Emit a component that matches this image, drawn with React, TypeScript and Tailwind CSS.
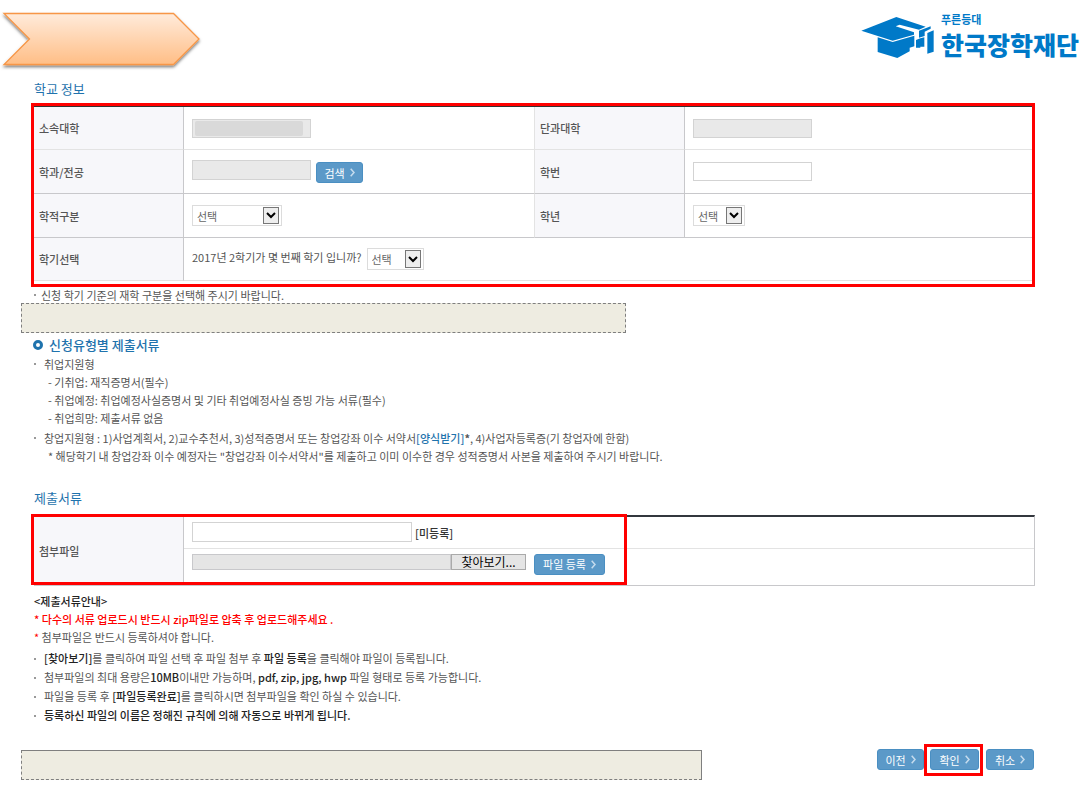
import type { ReactNode } from 'react';
import clsx from 'clsx';

interface SelectBoxProps {
  id: string;
  label?: string;
  className: string;
}

interface ArrowButtonProps {
  children: ReactNode;
  className?: string;
}

const thClass = 'bg-[#f7f7fa] border-r border-b border-r-[#c8c8cb] pl-[5px] text-left align-middle font-medium text-[#555]';
const inputClass = 'block border border-[#d3d3d3] px-1 text-[11px]';

function SelectBox({ id, label, className }: SelectBoxProps) {
  return (
    <div className={clsx('relative', className)}>
      <select
        id={id}
        aria-label={label}
        className="block h-full w-full appearance-none border border-[#dcdcdc] bg-white pl-1 text-[11px] leading-4 text-[#666]"
      >
        <option>선택</option>
      </select>
      <span className="pointer-events-none absolute inset-y-[2px] right-[3px] flex w-4 items-center justify-center border border-[#777] bg-[#eee]">
        <svg viewBox="0 0 10 7" className="h-[7px] w-[10px]" fill="none" stroke="#000" strokeWidth="2">
          <path d="M1 1l4 4 4-4" />
        </svg>
      </span>
    </div>
  );
}

function ArrowButton({ children, className }: ArrowButtonProps) {
  return (
    <button
      type="button"
      className={clsx(
        'flex h-[21px] shrink-0 items-center justify-center gap-[5px] rounded-[3px] border border-[#4a8fc2] bg-[#5b99c8] text-[11px] leading-4 text-white',
        className,
      )}
    >
      {children}
      <svg viewBox="0 0 5 9" className="h-[9px] w-[5px]" fill="none" stroke="#c5dcee" strokeWidth="1.5">
        <path d="M0.7 0.7l3.3 3.8-3.3 3.8" />
      </svg>
    </button>
  );
}

function Bullet({ children, className }: { children: ReactNode; className?: string }) {
  return (
    <li className={clsx('flex items-center gap-2', className)}>
      <span className="ml-px h-[2px] w-[2px] shrink-0 bg-[#999]" />
      <span>{children}</span>
    </li>
  );
}

function Logo() {
  return (
    <div className="flex text-[#0079c8]">
      <svg viewBox="0 0 252 168" className="h-14 w-[84px] shrink-0" fill="currentColor" aria-hidden="true">
        <path d="M13 68L118 27L206 56L186 65L128 50L116 55L171 73L171 80L107 98Z" />
        <path d="M62 88L107 102L172 83L172 115L158 119V130L121 150L62 132Z" />
        <path d="M186 68L221 55V62L203 71V84L186 89Z" />
        <path d="M177 96L190 91L202 88V116H190V119H177Z" />
        <path d="M211 75L230 67V131L211 137Z" />
      </svg>
      <div className="pt-1">
        <p className="text-[11px] leading-[14px] font-bold">푸른등대</p>
        <p className="text-[25px] leading-9 font-black whitespace-nowrap">한국장학재단</p>
      </div>
    </div>
  );
}

export default function App() {
  return (
    <div className="w-full bg-white pb-[30px] font-['Noto_Sans_CJK_KR','Noto_Sans',sans-serif] text-[11px] leading-[18px] text-[#555]">
      <header className="flex h-[79px] items-start justify-between pt-2 pr-px">
        <svg viewBox="0 0 208 66" className="h-[66px] w-[208px]" aria-hidden="true">
          <defs>
            <linearGradient id="arrowFill" x1="0" y1="0" x2="0" y2="1">
              <stop offset="0" stopColor="#ffebdb" />
              <stop offset="1" stopColor="#ffbe86" />
            </linearGradient>
            <filter id="arrowShadow" x="-5%" y="-10%" width="110%" height="130%">
              <feDropShadow dx="0" dy="2" stdDeviation="1.5" floodColor="#000" floodOpacity="0.5" />
            </filter>
          </defs>
          <path
            d="M4 5.5H173.5L199 31L173.5 56.5H4L29.5 31Z"
            fill="url(#arrowFill)"
            stroke="#f79646"
            strokeWidth="1.3"
            filter="url(#arrowShadow)"
          />
        </svg>
        <Logo />
      </header>

      <main className="pr-[45px] pl-[21px]">
        {/* School info */}
        <section className="ml-[10px]">
          <h2 className="mb-1 pl-[3px] text-[13px] leading-5 text-[#1f73ad]">학교 정보</h2>
          <div className="border-3 border-[#ff0000] pb-[3px]">
            <table className="w-full table-fixed border-separate border-spacing-0 border-t border-[#333]">
              <colgroup>
                <col className="w-[150px]" />
                <col className="w-[351px]" />
                <col className="w-[150px]" />
                <col />
              </colgroup>
              <tbody>
                <tr className="h-[43px]">
                  <th className={clsx(thClass, 'border-b-[#e3e3e3]')}>
                    <label htmlFor="university">소속대학</label>
                  </th>
                  <td className="border-r border-b border-[#e3e3e3] pl-2">
                    <div className="relative w-[119px]">
                      <input id="university" readOnly className={clsx(inputClass, 'h-[19px] w-full bg-[#e9e9e9]')} />
                      <span className="absolute inset-y-[2px] left-[3px] w-[108px] rounded-[2px] bg-[#d9d9d9]" />
                    </div>
                  </td>
                  <th className={clsx(thClass, 'border-b-[#e3e3e3]')}>
                    <label htmlFor="college">단과대학</label>
                  </th>
                  <td className="border-b border-[#e3e3e3] pl-2">
                    <input id="college" readOnly className={clsx(inputClass, 'h-[19px] w-[119px] bg-[#e9e9e9]')} />
                  </td>
                </tr>
                <tr className="h-11">
                  <th className={clsx(thClass, 'border-b-[#c8c8cb]')}>
                    <label htmlFor="major">학과/전공</label>
                  </th>
                  <td className="border-r border-b border-r-[#e3e3e3] border-b-[#c8c8cb] pl-2">
                    <div className="flex items-start gap-[5px]">
                      <input id="major" readOnly className={clsx(inputClass, 'h-5 w-[119px] bg-[#e9e9e9]')} />
                      <ArrowButton className="mt-[2px] w-[47px]">검색</ArrowButton>
                    </div>
                  </td>
                  <th className={clsx(thClass, 'border-b-[#c8c8cb]')}>
                    <label htmlFor="studentNo">학번</label>
                  </th>
                  <td className="border-b border-[#c8c8cb] pl-2">
                    <input id="studentNo" className={clsx(inputClass, 'h-[19px] w-[119px] bg-white')} />
                  </td>
                </tr>
                <tr className="h-11">
                  <th className={clsx(thClass, 'border-b-[#c8c8cb]')}>
                    <label htmlFor="status">학적구분</label>
                  </th>
                  <td className="border-r border-b border-r-[#e3e3e3] border-b-[#c8c8cb] pl-2">
                    <SelectBox id="status" className="h-[21px] w-[90px]" />
                  </td>
                  <th className={clsx(thClass, 'border-b-[#c8c8cb]')}>
                    <label htmlFor="grade">학년</label>
                  </th>
                  <td className="border-b border-[#c8c8cb] pl-2">
                    <SelectBox id="grade" className="h-[21px] w-[52px]" />
                  </td>
                </tr>
                <tr className="h-[43px]">
                  <th className={clsx(thClass, 'border-b-[#e3e3e3]')}>학기선택</th>
                  <td colSpan={3} className="border-b border-[#e3e3e3] pl-2">
                    <div className="flex items-start gap-[5px]">
                      <label htmlFor="semester">2017년 2학기가 몇 번째 학기 입니까?</label>
                      <SelectBox id="semester" className="h-[22px] w-[57px]" />
                    </div>
                  </td>
                </tr>
              </tbody>
            </table>
          </div>
          <ul className="pl-[2px] leading-4">
            <Bullet className="gap-[5px]">신청 학기 기준의 재학 구분을 선택해 주시기 바랍니다.</Bullet>
          </ul>
        </section>

        <div className="h-[30px] w-[605px] border border-dashed border-[#7f7f7f] bg-[#eeece1]" />

        {/* Required documents per type */}
        <section className="mt-[2px] ml-[10px] pl-[2px]">
          <h3 className="flex items-center gap-[6px] text-[13px] leading-5 font-medium text-[#1f73ad]">
            <span className="h-[10px] w-[10px] rounded-full border-3 border-[#1f73ad]" />
            신청유형별 제출서류
          </h3>
          <ul>
            <Bullet>취업지원형</Bullet>
            <li className="pl-[15px]">- 기취업: 재직증명서(필수)</li>
            <li className="pl-[15px]">- 취업예정: 취업예정사실증명서 및 기타 취업예정사실 증빙 가능 서류(필수)</li>
            <li className="pl-[15px]">- 취업희망: 제출서류 없음</li>
            <Bullet className="pt-[2px]">
              창업지원형 : 1)사업계획서, 2)교수추천서, 3)성적증명서 또는 창업강좌 이수 서약서
              <a href="#form" className="font-medium text-[#1f73ad]">[양식받기]</a>
              <b>*</b>, 4)사업자등록증(기 창업자에 한함)
            </Bullet>
            <li className="pl-[15px]">
              * 해당학기 내 창업강좌 이수 예정자는 "창업강좌 이수서약서"를 제출하고 이미 이수한 경우 성적증명서 사본을 제출하여 주시기 바랍니다.
            </li>
          </ul>
        </section>

        {/* Upload */}
        <section className="mt-[23px] ml-[10px]">
          <h2 className="mb-[7px] pl-[3px] text-[13px] leading-5 text-[#1f73ad]">제출서류</h2>
          <div className="relative pl-[3px]">
            <table className="w-full table-fixed border-separate border-spacing-0 border-t-2 border-r border-t-[#33373d] border-r-[#c8c8cb]">
              <colgroup>
                <col className="w-[150px]" />
                <col />
              </colgroup>
              <tbody>
                <tr className="h-8">
                  <th rowSpan={2} className={clsx(thClass, 'border-b-[#c8c8cb]')}>
                    첨부파일
                  </th>
                  <td className="border-b border-[#e3e3e3] pl-2">
                    <div className="flex items-center gap-[3px] pb-[2px]">
                      <input aria-label="등록된 파일" className={clsx(inputClass, 'h-5 w-[220px] bg-white')} />
                      <span className="pt-[2px] font-medium text-[#333]">[미등록]</span>
                    </div>
                  </td>
                </tr>
                <tr className="h-[37px]">
                  <td className="border-b border-[#c8c8cb] pl-2">
                    <div className="flex items-start pb-[6px]">
                      <input aria-label="첨부파일" readOnly className="h-4 w-[259px] border border-[#c8c8cb] bg-[#e5e5e5]" />
                      <button type="button" className="h-4 w-[75px] border border-[#aaa] bg-[#e5e5e5] text-xs leading-[14px] text-black">
                        찾아보기...
                      </button>
                      <ArrowButton className="ml-2 w-[71px]">파일 등록</ArrowButton>
                    </div>
                  </td>
                </tr>
              </tbody>
            </table>
            <div className="pointer-events-none absolute -top-px bottom-px left-0 w-[596px] border-3 border-[#ff0000]" />
          </div>
        </section>

        {/* Upload guide */}
        <section className="mt-[6px] ml-[10px] pl-[2px]">
          <h3 className="pl-px font-medium text-[#222]">&lt;제출서류안내&gt;</h3>
          <p className="pl-px font-medium text-[#ff0000]">* 다수의 서류 업로드시 반드시 zip파일로 압축 후 업로드해주세요 .</p>
          <p className="pl-px">
            <span className="text-[#ff0000]">*</span> 첨부파일은 반드시 등록하셔야 합니다.
          </p>
          <ul className="mt-[3px] leading-[19px] [&_b]:font-medium [&_b]:text-[#222]">
            <Bullet>
              <b>[찾아보기]</b>를 클릭하여 파일 선택 후 파일 첨부 후 <b>파일 등록</b>을 클릭해야 파일이 등록됩니다.
            </Bullet>
            <Bullet>
              첨부파일의 최대 용량은<b>10MB</b>이내만 가능하며, <b>pdf, zip, jpg, hwp</b> 파일 형태로 등록 가능합니다.
            </Bullet>
            <Bullet>
              파일을 등록 후 <b>[파일등록완료]</b>를 클릭하시면 첨부파일을 확인 하실 수 있습니다.
            </Bullet>
            <Bullet>
              <b>등록하신 파일의 이름은 정해진 규칙에 의해 자동으로 바뀌게 됩니다.</b>
            </Bullet>
          </ul>
        </section>

        <footer className="mt-[19px] flex items-start justify-between pr-px">
          <div className="mt-[6px] h-[30px] w-[681px] border border-[#7f7f7f] bg-[#eeece1] [border-style:solid_solid_dashed_dashed]" />
          <div className="flex items-start">
            <ArrowButton className="mt-[5px] w-[47px]">이전</ArrowButton>
            <div className="h-8 border-3 border-[#ff0000] pt-[2px] pr-px pl-[3px]">
              <ArrowButton className="w-[49px]">확인</ArrowButton>
            </div>
            <ArrowButton className="mt-[5px] ml-[3px] w-12">취소</ArrowButton>
          </div>
        </footer>
      </main>
    </div>
  );
}
